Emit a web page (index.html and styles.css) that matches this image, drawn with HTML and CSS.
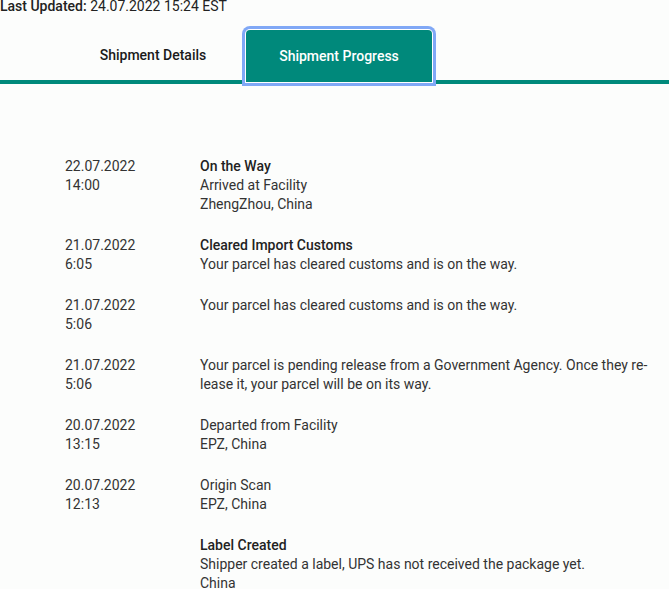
FILE: index.html
```html
<!DOCTYPE html>
<html lang="en">
<head>
<meta charset="utf-8">
<link rel="stylesheet" href="styles.css">
</head>
<body>
<div class="updated"><b>Last Updated:</b> 24.07.2022 15:24 EST</div>
<div class="tabs">
  <button class="tab">Shipment Details</button>
  <button class="tab active">Shipment Progress</button>
</div>
<div class="progress">
  <div class="row">
    <div class="date">22.07.2022<br>14:00</div>
    <div class="info"><div class="title">On the Way</div>Arrived at Facility<br>ZhengZhou, China</div>
  </div>
  <div class="row">
    <div class="date">21.07.2022<br>6:05</div>
    <div class="info"><div class="title">Cleared Import Customs</div>Your parcel has cleared customs and is on the way.</div>
  </div>
  <div class="row">
    <div class="date">21.07.2022<br>5:06</div>
    <div class="info">Your parcel has cleared customs and is on the way.</div>
  </div>
  <div class="row">
    <div class="date">21.07.2022<br>5:06</div>
    <div class="info">Your parcel is pending release from a Government Agency. Once they re&shy;lease it, your parcel will be on its way.</div>
  </div>
  <div class="row">
    <div class="date">20.07.2022<br>13:15</div>
    <div class="info">Departed from Facility<br>EPZ, China</div>
  </div>
  <div class="row">
    <div class="date">20.07.2022<br>12:13</div>
    <div class="info">Origin Scan<br>EPZ, China</div>
  </div>
  <div class="row">
    <div class="date"></div>
    <div class="info"><div class="title">Label Created</div>Shipper created a label, UPS has not received the package yet.<br>China</div>
  </div>
</div>
</body>
</html>
```
FILE: styles.css
```css
* { box-sizing: border-box; }
html, body { margin: 0; padding: 0; background: #fcfdfc; }
body {
  font-family: Roboto, "Liberation Sans", sans-serif;
  font-size: 14px;
  line-height: 19px;
  color: #333;
}
.updated {
  margin-top: -3px;
  color: #222;
}
.updated b { font-weight: 500; }
.tabs {
  display: flex;
  padding-left: 60px;
  border-bottom: 4px solid #00897b;
  height: 68px;
  align-items: flex-end;
}
.tab {
  width: 186px;
  height: 50px;
  border: 0;
  background: transparent;
  font-family: Roboto, "Liberation Sans", sans-serif;
  font-size: 14px;
  font-weight: 500;
  color: #1a1a1a;
  padding: 0;
  margin: 0;
  border-radius: 4px 4px 0 0;
}
.tab.active {
  background: #00897b;
  color: #fff;
  position: relative;
  top: 2px;
  height: 52px;
  box-shadow: 0 0 0 1px #fff, 0 0 0 4px #80a8f6;
}
.progress {
  padding: 73px 15px 0 65px;
}
.row {
  display: grid;
  grid-template-columns: 135px 1fr;
  margin-bottom: 22px;
}
.date { color: #333; }
.info { color: #333; }
.title { font-weight: 500; color: #222; }
```
